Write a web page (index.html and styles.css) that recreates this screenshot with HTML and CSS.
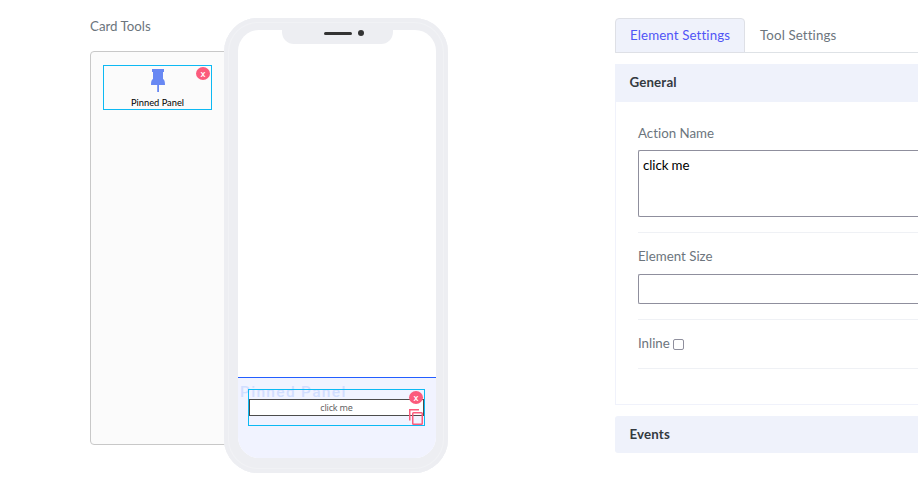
FILE: index.html
```html
<!DOCTYPE html>
<html lang="en">
<head>
<meta charset="utf-8">
<title>Card editor</title>
<link rel="stylesheet" href="styles.css">
</head>
<body>
<main class="editor">
  <section class="tools">
    <h2 class="tools-title"><span>Card Tools</span></h2>
    <div class="tools-panel">
      <div class="tool">
        <svg class="pin" width="14" height="23" viewBox="0 0 14 23"><path fill="#6888f3" d="M1 0h12v3h-1v7c1.500.8 2 2.500 2 6H0c0-3.500.5-5.200 2-6V3H1zM6.200 16h1.800v7H6.200z"/></svg>
        <span class="tool-name">Pinned Panel</span>
        <button class="remove">x</button>
      </div>
    </div>
  </section>
  <section class="phone">
    <div class="notch"><i class="speaker"></i><i class="camera"></i></div>
    <div class="screen">
      <div class="pinned">
        <span class="watermark">Pinned Panel</span>
        <div class="element">
          <div class="action"><span>click me</span></div>
          <button class="remove">x</button>
          <svg class="copy" width="14" height="16" viewBox="0 0 14 16" fill="none" stroke="#fb5b7c" stroke-width="1.500"><path d="M.75 11.500V.75H10"/><rect x="3.750" y="3.750" width="9.500" height="11.500" rx=".8"/></svg>
        </div>
      </div>
    </div>
  </section>
  <section class="settings">
    <nav class="tabs">
      <a class="tab active"><span>Element Settings</span></a>
      <a class="tab"><span>Tool Settings</span></a>
    </nav>
    <h3 class="bar"><span>General</span></h3>
    <div class="general">
      <div class="field">
        <label>Action Name</label>
        <div class="textarea"><span>click me</span></div>
      </div>
      <div class="field size">
        <label>Element Size</label>
        <div class="input"></div>
      </div>
      <div class="field inline">
        <label>Inline</label><i class="checkbox"></i>
      </div>
    </div>
    <h3 class="bar events"><span>Events</span></h3>
  </section>
</main>
</body>
</html>
```
FILE: styles.css
```css
* { box-sizing: border-box; }
body { margin: 0; background: #fff; font: 13.3px/18px Lato, sans-serif; font-variant-ligatures: none; color: #6c757d; }
h2, h3 { margin: 0; font-size: inherit; }
.editor { display: flex; height: 496px; padding-left: 90px; }
.tools { flex: none; width: 134px; padding-top: 17px; }
.tools-title { height: 34px; font-weight: 400; }
.tools-panel { width: 154px; height: 394px; padding: 13px 12px; border: 1px solid #c8c8c8; border-radius: 4px; background: #fbfbfb; }
.tool { position: relative; display: flex; flex-direction: column; align-items: center; width: 109px; height: 45px; padding-top: 3px; border: 1px solid #0db9f3; color: #000; }
.pin { flex: none; }
.tool-name { margin-top: 5px; font: 9.3px/12px Lato, sans-serif; white-space: nowrap; }
.remove { position: absolute; top: 1px; right: 1px; width: 14px; height: 13px; padding: 0; border: 0; border-radius: 50%; background: #fb5b7c; color: #fff; font: 600 9px/12px "Open Sans", sans-serif; text-align: center; }
.phone { position: relative; flex: none; width: 224px; height: 455px; margin-top: 18px; padding: 12px 12px 15px 14px; border-radius: 34px; background: #edeef2; box-shadow: inset 0 0 0 4px #edeef2, inset 0 0 0 5px #f1f2f5; }
.notch { position: absolute; top: 12px; left: 58px; display: flex; gap: 6px; width: 111px; height: 14px; padding: 0 0 0 42px; border-radius: 0 0 12px 12px; background: #edeef2; }
.speaker { width: 28px; height: 3px; margin-top: 2px; border-radius: 2px; background: #333; }
.camera { width: 6px; height: 6px; border-radius: 50%; background: #333; }
.screen { display: flex; flex-direction: column; justify-content: flex-end; height: 428px; overflow: hidden; border-radius: 21px; background: #fff; }
.pinned { position: relative; height: 81px; padding: 11px 11px 0 10px; border-top: 1px solid #245eff; background: #f1f3ff; }
.watermark { position: absolute; top: 4px; left: 2px; color: #d2deff; font: 500 15.5px/20px Roboto, sans-serif; letter-spacing: 1.3px; white-space: nowrap; }
.element { position: relative; height: 37px; padding-top: 9px; border: 1px solid #0db9f3; }
.action { height: 17px; border: 1px solid #4c4c4c; background: #fff; color: #666; font: 9px/15px "Noto Sans", sans-serif; letter-spacing: -0.2px; text-align: center; }
.copy { position: absolute; right: 1px; bottom: 0; }
.settings { flex: 1; min-width: 0; margin-left: 167px; padding-top: 18px; }
.tabs { display: flex; height: 35px; border-bottom: 1px solid #dee2e6; }
.tab { height: 35px; padding: 7px 14px; border: 1px solid transparent; letter-spacing: 0.12px; white-space: nowrap; }
.active { width: 130px; border-color: #dee0e6; border-radius: 4px 4px 0 0; background: #eff2fb; color: #4f55f6; }
.bar { height: 38px; margin-top: 11px; padding: 9px 14.5px; background: #eff2fb; color: #343a40; font-weight: 700; letter-spacing: 0.15px; }
.general { height: 303px; padding: 22px 0 0 22px; border: 1px solid #f0f2fb; border-top: 0; border-right: 0; }
.field { height: 109px; border-bottom: 1px solid #eff1f5; }
.field label { display: block; white-space: nowrap; }
.textarea { height: 67px; margin-top: 8px; padding: 5px 4px; border: 1px solid #8f8f9d; border-right: 0; border-radius: 2px 0 0 2px; color: #000; letter-spacing: -0.1px; }
.size { height: 87px; padding-top: 14px; }
.input { height: 30px; margin-top: 9px; border: 1px solid #8f8f9d; border-right: 0; border-radius: 2px 0 0 2px; }
.inline { display: flex; align-items: center; gap: 3px; height: 49px; }
.inline label { margin-top: -2px; }
.checkbox { width: 11px; height: 11px; border: 1px solid #8f8f9d; border-radius: 2px; }
.events { height: 37px; margin-top: 11px; border-radius: 3px 0 0 3px; }
```
